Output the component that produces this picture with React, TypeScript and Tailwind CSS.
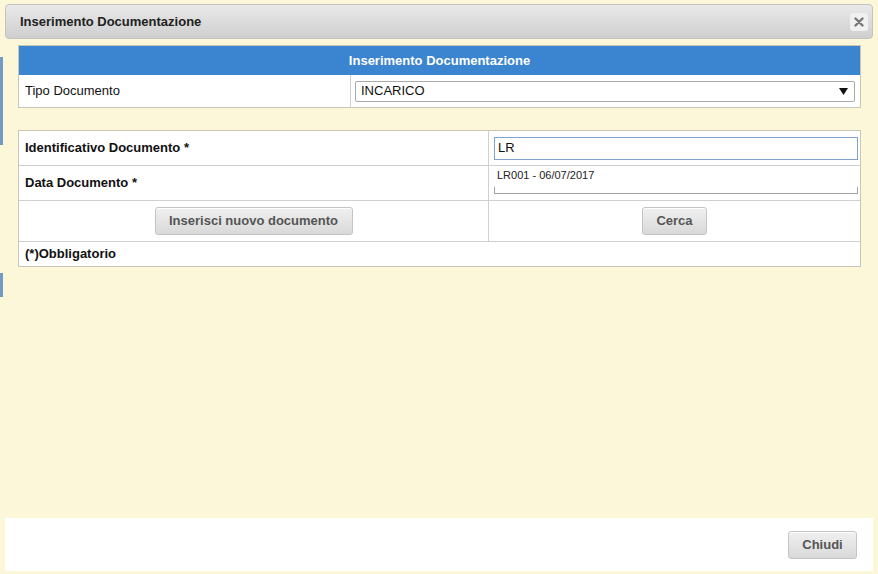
import React from "react";

const btn =
  "h-[28px] rounded-[3px] border border-[#c4c4c4] bg-gradient-to-b from-[#f0f0f0] to-[#d9d9d9] text-[13px] font-bold text-[#555] shadow-[inset_0_1px_0_#fff]";

export default function App() {
  return (
    <div
      className="relative w-[878px] h-[574px] overflow-hidden bg-[#fcf7d9] text-[#111]"
      style={{ fontFamily: '"Liberation Sans", Arial, sans-serif' }}
    >
      {/* background page fragments on left edge */}
      <div className="absolute left-0 top-[57px] h-[88px] w-[3px] bg-[#7399c6]" />
      <div className="absolute left-0 top-[273px] h-[24px] w-[3px] bg-[#7399c6]" />

      <div className="flex h-full flex-col">
        {/* title bar */}
        <div className="mx-[5px] mt-[4px] flex h-[35px] items-center justify-between rounded-[4px] border border-[#c3c3c3] bg-gradient-to-b from-[#e9e9e9] to-[#cfcfcf] pl-[14px] pr-[4px]">
          <span className="text-[13px] font-bold text-[#222]">Inserimento Documentazione</span>
          <div className="flex h-[18px] w-[18px] items-center justify-center rounded-[3px] bg-[#f0f0f0]">
            <svg width="10" height="10" viewBox="0 0 10 10">
              <path d="M1.5 1.5 L8.5 8.5 M8.5 1.5 L1.5 8.5" stroke="#777" strokeWidth="2.4" strokeLinecap="round" />
            </svg>
          </div>
        </div>

        {/* content */}
        <div className="flex flex-1 flex-col px-[18px] pr-[17px] pt-[6px]">
          {/* table 1 */}
          <div className="border border-[#c9c6b8] bg-white">
            <div className="flex h-[29px] items-center justify-center bg-[#3b84d0] text-[13px] font-bold text-white">
              Inserimento Documentazione
            </div>
            <div className="flex h-[32px] items-center">
              <div className="flex h-full w-[332px] items-center border-r border-[#d0d0d0] pl-[6px] text-[13px]">
                Tipo Documento
              </div>
              <div className="flex flex-1 items-center pl-[4px] pr-[5px]">
                <div className="flex h-[21px] flex-1 items-center justify-between rounded-[2px] border border-[#a9a9a9] bg-white pl-[5px] pr-[6px] text-[13px]">
                  <span>INCARICO</span>
                  <svg width="9" height="7" viewBox="0 0 9 7">
                    <path d="M0 0 H9 L4.5 7 Z" fill="#111" />
                  </svg>
                </div>
              </div>
            </div>
          </div>

          {/* table 2 */}
          <div className="mt-[22px] border border-[#c9c6b8] bg-white">
            <div className="flex h-[35px] border-b border-[#d0d0d0]">
              <div className="flex w-[470px] items-center border-r border-[#d0d0d0] pl-[6px] text-[13px] font-bold">
                Identificativo Documento *
              </div>
              <div className="relative flex flex-1 items-center pl-[5px] pr-[2px]">
                <div className="flex h-[23px] flex-1 items-center border border-[#7fa2cf] pl-[3px] text-[13px]">
                  LR
                </div>
              </div>
            </div>
            <div className="flex h-[35px] border-b border-[#d0d0d0]">
              <div className="flex w-[470px] items-center border-r border-[#d0d0d0] pl-[6px] text-[13px] font-bold">
                Data Documento *
              </div>
              <div className="flex flex-1 flex-col pl-[5px] pr-[2px]">
                <div className="h-[21px] bg-white pl-[3px] pt-[1px] text-[11px] text-[#222]">
                  LR001 - 06/07/2017
                </div>
                <div className="h-[7px] border-x border-b border-[#a0a0a0]" />
              </div>
            </div>
            <div className="flex h-[41px] border-b border-[#d0d0d0]">
              <div className="flex w-[470px] items-center justify-center border-r border-[#d0d0d0]">
                <button className={`${btn} w-[198px]`}>Inserisci nuovo documento</button>
              </div>
              <div className="flex flex-1 items-center justify-center">
                <button className={`${btn} w-[65px]`}>Cerca</button>
              </div>
            </div>
            <div className="flex h-[24px] items-center pl-[6px] text-[13px] font-bold">(*)Obbligatorio</div>
          </div>
        </div>

        {/* footer */}
        <div className="mx-[5px] mb-[3px] flex h-[53px] items-center justify-end bg-white pr-[16px]">
          <button className={`${btn} w-[69px]`}>Chiudi</button>
        </div>
      </div>
    </div>
  );
}
